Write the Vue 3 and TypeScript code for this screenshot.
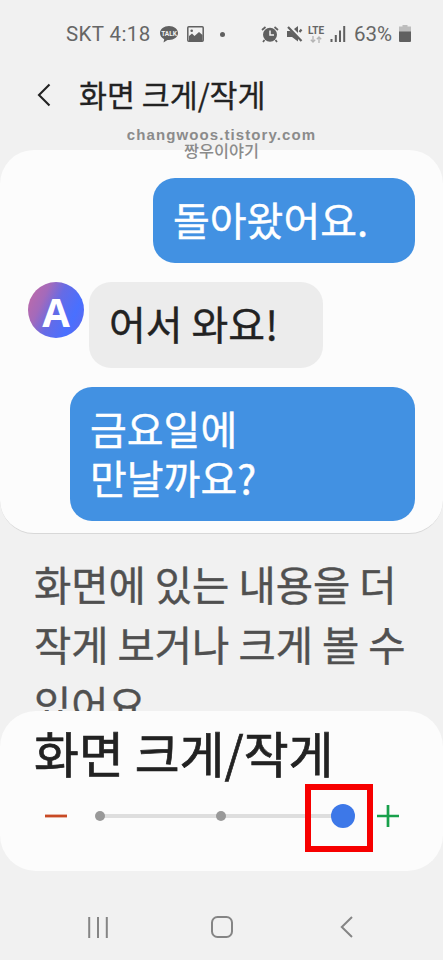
<script setup lang="ts">
import { ref } from 'vue'

interface Message {
  kind: 'sent' | 'received'
  size: 'short' | 'reply' | 'long'
  lines: string[]
}

const messages: Message[] = [
  { kind: 'sent', size: 'short', lines: ['돌아왔어요.'] },
  { kind: 'received', size: 'reply', lines: ['어서 와요!'] },
  { kind: 'sent', size: 'long', lines: ['금요일에', '만날까요?'] },
]
const description = ['화면에 있는 내용을 더', '작게 보거나 크게 볼 수', '있어요.']
const steps = [0, 1, 2]
const level = ref(2)
</script>

<template>
  <div class="screen">
    <div class="status">
      <span class="carrier">SKT 4:18</span>
      <svg class="talk" width="18" height="17" viewBox="0 0 18 17">
        <path d="M9 0C4 0 0 3 0 7c0 2.700 1.700 5 4.200 6.200L3.500 16.500 7.500 14H9c5 0 9-3 9-7S14 0 9 0z" fill="#606060" />
        <text x="9" y="9.500" text-anchor="middle">TALK</text>
      </svg>
      <svg class="photo" width="17" height="16" viewBox="0 0 17 16">
        <rect x=".8" y=".8" width="15.400" height="14.400" rx="1" fill="none" stroke="#606060" stroke-width="1.500" />
        <path d="M2 10l3-2.500L7.500 10l4.500-4L15.500 9v6H2z" fill="#606060" />
        <circle cx="4.700" cy="4.700" r="1.300" fill="#606060" />
      </svg>
      <i class="more"></i>
      <svg class="alarm" width="18" height="17" viewBox="0 0 18 17">
        <circle cx="9" cy="8.700" r="7" fill="#606060" />
        <path d="M1 4L4.500 1M17 4l-3.500-3M3.500 14L2 16M14.500 14l1.500 2" stroke="#606060" stroke-width="1.700" fill="none" />
        <path d="M9 4.500V9h4" stroke="#f1f1f1" stroke-width="1.500" fill="none" />
      </svg>
      <svg class="mute" width="17" height="17" viewBox="0 0 17 17">
        <path d="M1 5h3.500L12 12v3.500L6 11H1zM8 3l4-3v7z" fill="#606060" />
        <path d="M2 1l13.500 14M13.500 6l2-2.500" stroke="#606060" stroke-width="2.200" />
      </svg>
      <div class="network">
        <span>LTE</span>
        <svg width="12" height="7" viewBox="0 0 12 7"><path d="M3 0v6M.8 3.800L3 6l2.200-2.200M9 7V1M6.800 3.200L9 1l2.200 2.200" fill="none" stroke="#b4b4b4" stroke-width="1.300" /></svg>
      </div>
      <svg class="signal" width="16" height="16" viewBox="0 0 16 16">
        <path d="M1.500 13v3M5.800 9v7M10 4.500V16M14.200 0v16" stroke="#606060" stroke-width="2" />
      </svg>
      <span class="percent">63%</span>
      <svg class="battery" width="12" height="17" viewBox="0 0 12 17">
        <path d="M3.500 0h5v1.500H12V7H0V1.500h3.500z" fill="#bdbdbd" />
        <path d="M0 6.500h12V16q0 1-1 1H1q-1 0-1-1z" fill="#606060" />
      </svg>
    </div>

    <header class="header">
      <svg width="14" height="24" viewBox="0 0 14 24"><path d="M12.500 1.500L2 12l10.500 10.500" fill="none" stroke="#222" stroke-width="2.100" /></svg>
      <h1>화면 크게/작게</h1>
    </header>
    <div class="watermark"><span>changwoos.tistory.com</span><span class="nick">짱우이야기</span></div>

    <section class="preview">
      <div v-for="(message, index) in messages" :key="index" class="message" :class="message.kind">
        <div v-if="message.kind === 'received'" class="avatar">A</div>
        <div class="bubble" :class="message.size">
          <span v-for="line in message.lines" :key="line">{{ line }}</span>
        </div>
      </div>
    </section>

    <div class="description">
      <span v-for="line in description" :key="line">{{ line }}</span>
    </div>

    <section class="zoom">
      <h2>화면 크게/작게</h2>
      <div class="controls">
        <button class="minus" @click="level = Math.max(0, level - 1)"><svg width="22" height="22"><path d="M0 11h22" stroke="#c84a25" stroke-width="2.800" /></svg></button>
        <div class="slider">
          <i v-for="step in steps" :key="step" class="stop" :class="{ active: step === level }" @click="level = step"></i>
          <div class="highlight"></div>
        </div>
        <button class="plus" @click="level = Math.min(2, level + 1)"><svg width="22" height="22"><path d="M0 11h22M11 0v22" stroke="#18a04b" stroke-width="2.700" /></svg></button>
      </div>
    </section>

    <nav class="navigation">
      <svg width="20" height="21" viewBox="0 0 20 21"><path d="M1.200 0v21M10 0v21M18.800 0v21" stroke="#858585" stroke-width="2" /></svg>
      <svg width="22" height="22" viewBox="0 0 22 22"><rect x="1" y="1" width="20" height="20" rx="5.500" fill="none" stroke="#858585" stroke-width="2" /></svg>
      <svg width="13" height="22" viewBox="0 0 13 22"><path d="M12 1L1.800 11 12 21" fill="none" stroke="#858585" stroke-width="2" /></svg>
    </nav>
  </div>
</template>

<style>
body { background: #f1f1f1; }
</style>

<style scoped>
* { box-sizing: border-box; }
.screen { width: 443px; height: 960px; overflow: hidden; display: flex; flex-direction: column; background: #f1f1f1; font-family: Roboto, "Noto Sans CJK KR", sans-serif; color: #222; }
svg { display: block; flex: none; }
.status { height: 68px; padding-left: 66px; display: flex; align-items: center; color: #666; font-size: 20.500px; flex: none; white-space: nowrap; }
.carrier { width: 94px; letter-spacing: .4px; }
.talk text { font: bold 6.500px Roboto, sans-serif; fill: #f1f1f1; }
.photo { margin-left: 9px; }
.more { width: 5px; height: 5px; margin-left: 16px; border-radius: 50%; background: #606060; }
.alarm { margin-left: 36px; }
.mute { margin-left: 7px; }
.network { width: 18px; margin-left: 4px; display: flex; flex-direction: column; align-items: center; font: bold 10px/10px Roboto, sans-serif; }
.signal { margin-left: 5px; }
.percent { width: 38px; margin-left: 8px; }
.battery { margin-left: 7px; margin-bottom: 1px; }
.header { height: 56px; padding: 0 0 3px 37px; display: flex; align-items: center; gap: 28px; flex: none; }
h1, h2 { margin: 0; font-family: "Noto Sans CJK KR", sans-serif; font-weight: 400; white-space: nowrap; }
h1 { font-size: 30.400px; line-height: 48px; padding-bottom: 2px; -webkit-text-stroke: .3px; }
.watermark { height: 26px; padding-top: 3px; display: flex; flex-direction: column; align-items: center; flex: none; z-index: 1; color: #8b8b8b; font: bold 15px/16px "Liberation Sans", sans-serif; letter-spacing: 1.100px; }
.nick { font: 500 16.300px/14px "Noto Sans CJK KR", sans-serif; letter-spacing: 0; }
.preview { height: 384px; padding: 28px 28px 0; display: flex; flex-direction: column; gap: 19px; flex: none; border-bottom: 1px solid #d8d8d8; border-radius: 34px; background: #fcfcfc; }
.message { display: flex; }
.sent { justify-content: flex-end; color: #fff; }
.received { gap: 5px; }
.bubble { padding: 17px 20px 0; display: flex; flex-direction: column; border-radius: 22px; font: 400 40px/49px "Noto Sans CJK KR", sans-serif; white-space: nowrap; -webkit-text-stroke: .4px; }
.sent .bubble { background: #4291e2; }
.received .bubble { background: #ececec; }
.short { width: 262px; height: 85px; }
.reply { width: 234px; height: 86px; }
.long { width: 345px; height: 134px; }
.avatar { width: 56px; height: 56px; display: flex; align-items: center; justify-content: center; border-radius: 50%; background: linear-gradient(115deg, #c66aa3 0%, #a36abb 28%, #666be5 48%, #4970ff 75%, #6367e8 100%); color: #fff; font: bold 40px/56px "Open Sans", sans-serif; padding-top: 3px; }
.description { height: 177px; padding: 20px 34px 0; display: flex; flex-direction: column; flex: none; overflow: hidden; color: #505050; font: 400 40.500px/60px "Noto Sans CJK KR", sans-serif; white-space: nowrap; -webkit-text-stroke: .4px; }
.description span { flex: none; }
.zoom { height: 160px; padding: 7px 34px 0; flex: none; border-radius: 36px; background: #fcfcfc; }
h2 { font-size: 48.800px; line-height: 68px; padding-bottom: 4px; -webkit-text-stroke: .7px; }
.controls { height: 52px; display: flex; align-items: center; padding-left: 10.500px; }
button { width: 22px; height: 22px; padding: 0; border: 0; background: none; }
.slider { position: relative; width: 243.500px; height: 24px; margin: 0 33px; display: flex; align-items: center; justify-content: space-between; background: linear-gradient(#dedede, #dedede) center / 100% 4px no-repeat; }
.stop { width: 10px; height: 10px; margin: 0 -5px; border-radius: 50%; background: #999; }
.active { width: 24px; height: 24px; margin: 0 -12px; background: #3d78e8; }
.highlight { position: absolute; right: -30px; top: -20px; width: 68px; height: 68px; border: 6.500px solid #f70000; pointer-events: none; }
.plus { margin-left: .5px; }
.navigation { height: 89px; padding: 23px 90px 0 88px; display: grid; grid-template-columns: 123px 129px 13px; align-items: center; }
</style>
